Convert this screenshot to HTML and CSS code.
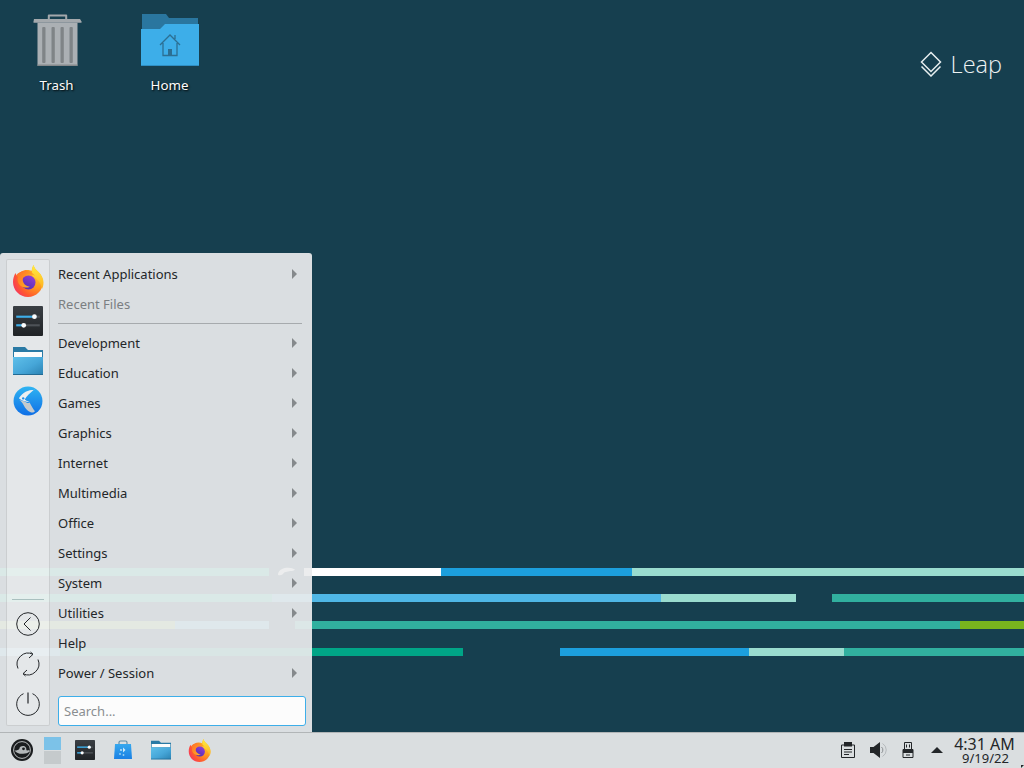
FILE: index.html
```html
<!DOCTYPE html>
<html lang="en">
<head>
<meta charset="utf-8">
<title>Desktop</title>
<link rel="stylesheet" href="styles.css">
</head>
<body>
<svg class="sprite" aria-hidden="true">
  <defs>
    <radialGradient id="ffBase" cx="0.85" cy="0.3" r="1">
      <stop offset="0" stop-color="#ffc530"/>
      <stop offset="0.4" stop-color="#ff9a1e"/>
      <stop offset="0.72" stop-color="#ff5a2e"/>
      <stop offset="1" stop-color="#f22c6e"/>
    </radialGradient>
    <linearGradient id="ffFlame" x1="0.5" y1="0" x2="0.5" y2="1">
      <stop offset="0" stop-color="#ffee40"/>
      <stop offset="1" stop-color="#ffb020"/>
    </linearGradient>
    <linearGradient id="ffCore" x1="0.8" y1="0" x2="0.2" y2="1">
      <stop offset="0" stop-color="#9440d4"/>
      <stop offset="1" stop-color="#4e2cb4"/>
    </linearGradient>
    <linearGradient id="ffFox" x1="0" y1="0" x2="1" y2="0.6">
      <stop offset="0" stop-color="#ff6a2a"/>
      <stop offset="1" stop-color="#ffb421"/>
    </linearGradient>
    <linearGradient id="folderFront" x1="0" y1="0" x2="1" y2="1">
      <stop offset="0" stop-color="#5fc0ea"/>
      <stop offset="0.55" stop-color="#46a6d8"/>
      <stop offset="1" stop-color="#2b82b2"/>
    </linearGradient>
    <linearGradient id="settingsBg" x1="0" y1="0" x2="0" y2="1">
      <stop offset="0" stop-color="#3a3f44"/>
      <stop offset="1" stop-color="#202326"/>
    </linearGradient>
    <linearGradient id="kdeBg" x1="0" y1="0" x2="0" y2="1">
      <stop offset="0" stop-color="#2fb4f2"/>
      <stop offset="1" stop-color="#0f6fe6"/>
    </linearGradient>
    <linearGradient id="bagBg" x1="0" y1="0" x2="0" y2="1">
      <stop offset="0" stop-color="#36a8ee"/>
      <stop offset="1" stop-color="#1a80e4"/>
    </linearGradient>

    <symbol id="i-firefox" viewBox="0 0 32 32">
      <path d="M1 17C1 13.500 2 10.500 3.500 8c.3 1.200.7 2 1.500 2.700C7 7.500 10.500 5 15 5c2 0 3.500.4 4.500 1C20 4 20.500 2 21.500 0c.5 3 3 5 5 7 3 3 4.500 6.500 4.500 10 0 8.300-6.700 15-15 15S1 25.300 1 17z" fill="url(#ffBase)"/>
      <path d="M21.500 0c.5 3 3 5 5 7 3 3 5 6.500 5 10.500 0 2.500-.6 4.500-1.500 6.500-.8-5-3.500-9.500-8-11.500-1.500-.8-2-3-2-6 0-2.500.3-4.700 1.500-6.500z" fill="url(#ffFlame)"/>
      <circle cx="16.500" cy="17.500" r="7" fill="url(#ffCore)"/>
      <path d="M4 10.500C6.500 7 10.500 5.500 15 6c3.500.4 6.500 2.300 8 5-2.500-1.500-5.500-2.300-9-1.300-.5.9-1.500 1.300-2.500 2-1.200 2-1 4 .3 6.500 1 1.700 3 3 6 3.500-3 1.500-7 1-9.800-1.500-2.500-2.500-3-6-2-8.500-.8-.4-1.500-.7-2-1.200z" fill="url(#ffFox)"/>
    </symbol>

    <symbol id="i-settings" viewBox="0 0 28 28">
      <rect width="28" height="28" rx="1" fill="url(#settingsBg)"/>
      <rect x="3" y="9" width="19" height="2" fill="#3daee9"/>
      <rect x="22" y="9" width="3" height="2" fill="#4d5257"/>
      <circle cx="20" cy="10" r="2.200" fill="#fcfcfc"/>
      <rect x="3" y="17" width="7" height="2" fill="#3daee9"/>
      <rect x="10" y="17" width="15" height="2" fill="#4d5257"/>
      <circle cx="10" cy="18" r="2.200" fill="#fcfcfc"/>
    </symbol>

    <symbol id="i-folder" viewBox="0 0 30 28">
      <path d="M0 0h12l3 3h15v24H0z" fill="#2a7aa5"/>
      <rect x="1" y="5" width="28" height="5" fill="#fcfcfc"/>
      <path d="M0 10h30v18H0z" fill="url(#folderFront)"/>
      <rect y="27" width="30" height="1" fill="#236b94"/>
    </symbol>
  </defs>
</svg>

<div class="screen">
  <main class="desktop">
    <div class="wall wall-1">
      <span class="bar w269 under"></span>
      <span class="gap9"></span>
      <svg class="gecko-mark" viewBox="0 0 18 9"><path d="M0 8C0 4 4 1 9 .5c4-.3 7 .5 9 2-1 1.500-3 1.500-5 1.500-2 0-3 1-5 1-1.500 0-2 1-3 2.500-1.500 1-4 1.500-5 .5z" fill="#fff"/></svg>
      <span class="gap9"></span>
      <span class="bar w137 white"></span>
      <span class="bar w191 blue"></span>
      <span class="bar w392 pale"></span>
    </div>
    <div class="wall wall-2">
      <span class="bar w272 under"></span>
      <span class="bar w389 sky"></span>
      <span class="bar w135 pale"></span>
      <span class="gap36"></span>
      <span class="bar w192 teal"></span>
    </div>
    <div class="wall wall-3">
      <span class="bar w175 lime-pale"></span>
      <span class="bar w94 sky"></span>
      <span class="gap26"></span>
      <span class="bar w665 teal"></span>
      <span class="bar w64 green"></span>
    </div>
    <div class="wall wall-4">
      <span class="bar w60 sky"></span>
      <span class="bar w403 emerald"></span>
      <span class="gap97"></span>
      <span class="bar w189 blue"></span>
      <span class="bar w95 pale"></span>
      <span class="bar w180 teal"></span>
    </div>

    <div class="desk-icons">
      <div class="desk-icon">
        <svg class="desk-glyph" viewBox="0 0 58 52">
          <path d="M19.800 5V1.500q0-1 1-1h17.400q1 0 1 1V5h-2V2.500H21.800V5z" fill="#a3a8ac"/>
          <path d="M6 5h46l1.500 2.500v1.200H5.500V7.500z" fill="#a4a9ad"/>
          <rect x="9.500" y="8.700" width="40" height="43" fill="#abb0b4"/>
          <rect x="9.500" y="50.500" width="40" height="1.500" fill="#85898c"/>
          <rect x="14.200" y="13" width="3.300" height="36" rx="1" fill="#7f8487"/>
          <rect x="23.500" y="13" width="3.300" height="36" rx="1" fill="#7f8487"/>
          <rect x="32.500" y="13" width="3.300" height="36" rx="1" fill="#7f8487"/>
          <rect x="41.500" y="13" width="3.300" height="36" rx="1" fill="#7f8487"/>
        </svg>
        <span class="desk-label">Trash</span>
      </div>
      <div class="desk-icon">
        <svg class="desk-glyph" viewBox="0 0 58 52">
          <path d="M1 0h24l3 4h29v20H1z" fill="#2a769f"/>
          <path d="M0 15h19l5-5h34v42H0z" fill="#3daee9"/>
          <rect y="51" width="58" height="1" fill="#2f8fc4"/>
          <path d="M19 31l10-10 10 10M22 29v12.500h14V29M34 25v-4" fill="none" stroke="#2c6f93" stroke-width="1.300"/>
          <rect x="27" y="35" width="4" height="6" fill="#2c6f93"/>
        </svg>
        <span class="desk-label">Home</span>
      </div>
    </div>

    <div class="leap">
      <svg class="leap-mark" viewBox="0 0 22 26">
        <path d="M11 1.500 20.500 11 11 20.500 1.500 11z" fill="none" stroke="#e6eeef" stroke-width="1.500"/>
        <path d="M1.500 15.500 11 25l9.500-9.500" fill="none" stroke="#e6eeef" stroke-width="1.500"/>
      </svg>
      <span class="leap-text">Leap</span>
    </div>

    <section class="menu">
      <aside class="rail">
        <div class="rail-apps">
          <div class="rail-cell"><svg class="rail-icon ff"><use href="#i-firefox"/></svg></div>
          <div class="rail-cell"><svg class="rail-icon"><use href="#i-settings"/></svg></div>
          <div class="rail-cell"><svg class="rail-icon"><use href="#i-folder"/></svg></div>
          <div class="rail-cell">
            <svg class="rail-icon" viewBox="0 0 28 28">
              <circle cx="14" cy="14" r="13.500" fill="url(#kdeBg)"/>
              <path d="M6 13c2 1.500 3 3 4 5 1.500 3 3 5 6.500 6.500 2 .5 3 0 4-1-2-2-3.500-5.500-5-8-1.500 1-3 0-4.500-1-1.500-.5-3-1-5-1.500z" fill="#c4cace"/>
              <path d="M20 3.500C14 3.500 9 6 5.500 11.500c1.500 1.500 4 2.500 6.500 3 1 .3 2 .5 3.500.5-1.500-1-3.500-1.300-4.500-2.500 1.500-3 5-6 9-9.500z" fill="#eceff1"/>
              <circle cx="9.500" cy="11.500" r="1.100" fill="#1f8fea"/>
            </svg>
          </div>
        </div>
        <div class="rail-actions">
          <hr class="rail-sep">
          <div class="rail-cell">
            <svg class="action-icon" viewBox="0 0 24 24"><circle cx="12" cy="12" r="11.300" fill="none" stroke="#232629"/><path d="M14.500 5.500 8 12l6.500 6.500" fill="none" stroke="#232629"/></svg>
          </div>
          <div class="rail-cell">
            <svg class="action-icon" viewBox="0 0 24 24"><path d="M2 16.500A11 11 0 0 1 17 2.300M22 7.500A11 11 0 0 1 7 21.700" fill="none" stroke="#232629"/><path d="M13 6l4-3.700L14.500 0M11 18l-4 3.700 2.500 2.300" fill="none" stroke="#232629"/></svg>
          </div>
          <div class="rail-cell">
            <svg class="action-icon" viewBox="0 0 24 24"><path d="M7.500 1.700a11.300 11.300 0 1 0 9 0" fill="none" stroke="#232629"/><path d="M12 .5v11" fill="none" stroke="#232629" stroke-width="1.200"/></svg>
          </div>
        </div>
      </aside>
      <div class="menu-main">
        <ul class="entries">
          <li class="entry has-sub">Recent Applications</li>
          <li class="entry muted">Recent Files</li>
          <li class="entry-sep"></li>
          <li class="entry has-sub">Development</li>
          <li class="entry has-sub">Education</li>
          <li class="entry has-sub">Games</li>
          <li class="entry has-sub">Graphics</li>
          <li class="entry has-sub">Internet</li>
          <li class="entry has-sub">Multimedia</li>
          <li class="entry has-sub">Office</li>
          <li class="entry has-sub">Settings</li>
          <li class="entry has-sub">System</li>
          <li class="entry has-sub">Utilities</li>
          <li class="entry">Help</li>
          <li class="entry has-sub">Power / Session</li>
        </ul>
        <input class="search" type="text" placeholder="Search...">
      </div>
    </section>
  </main>

  <footer class="panel">
    <svg class="kickoff" viewBox="0 0 22 22">
      <circle cx="11" cy="11" r="11" fill="#1b1d1f"/>
      <circle cx="11" cy="11" r="8.400" fill="none" stroke="#dfe2e3" stroke-width=".8"/>
      <path d="M3.500 11.500c2 2.800 5 3.500 8.500 3.300 2.500-.1 5-.7 6.500-2.300l-.2-1.500c-1 .5-2 .5-3 .3.500-2.200-1-4.300-3.300-4.300-2 0-3.700 1.300-3.700 3-.1.800-2.500 1.500-4.800 1.500z" fill="#b4b8ba"/>
      <circle cx="12.500" cy="9.800" r="1.400" fill="#1b1d1f"/>
      <path d="M3.500 12.500c2 3 5 4 8.500 3.800 2.500-.1 5-.9 6.500-2.800" fill="none" stroke="#1b1d1f" stroke-width=".8"/>
    </svg>
    <div class="pager">
      <span class="desk-a"></span>
      <span class="desk-b"></span>
    </div>
    <div class="tasks">
      <div class="task"><svg class="task-icon"><use href="#i-settings"/></svg></div>
      <div class="task">
        <svg class="task-icon" viewBox="0 0 20 20">
          <path d="M6 4V2.500Q6 1 7.500 1h5Q14 1 14 2.500V4" fill="none" stroke="#5f8ea8" stroke-width="1.200"/>
          <path d="M2 4h16l1 15H1z" fill="url(#bagBg)"/>
          <path d="M10 7.500l2.500 2.500-2.500 2.500z" fill="#cfeaf9"/>
          <circle cx="8" cy="10" r=".9" fill="#cfeaf9"/>
          <circle cx="7" cy="14" r=".9" fill="#9bd4f5"/>
          <circle cx="10.500" cy="15" r=".9" fill="#9bd4f5"/>
        </svg>
      </div>
      <div class="task"><svg class="task-icon"><use href="#i-folder"/></svg></div>
      <div class="task"><svg class="task-icon firefox"><use href="#i-firefox"/></svg></div>
    </div>
    <div class="tray">
      <div class="tray-item">
        <svg class="tray-icon" viewBox="0 0 16 16">
          <path d="M4 3H1.500v12.500h13V3H12" fill="none" stroke="#232629"/>
          <rect x="4" y="0" width="8" height="4.500" fill="#232629"/>
          <path d="M4 7.500h8M4 10h8M4 12.500h5" stroke="#232629"/>
        </svg>
      </div>
      <div class="tray-item">
        <svg class="tray-icon" viewBox="0 0 16 16">
          <path d="M0 5h3.500L10 0v16l-6.500-5H0z" fill="#232629"/>
          <path d="M11.500 5a4 4 0 0 1 0 6" fill="none" stroke="#8a8e91"/>
          <path d="M12.500 1.500a7.500 7.500 0 0 1 0 13" fill="none" stroke="#b6babd"/>
        </svg>
      </div>
      <div class="tray-item">
        <svg class="tray-icon" viewBox="0 0 16 16">
          <path d="M4.500.5h7v7h-7z" fill="none" stroke="#232629"/>
          <path d="M6.500 2.500v3M9.500 2.500v3" stroke="#232629"/>
          <path d="M3 7.500h10v8H3z" fill="none" stroke="#232629"/>
          <path d="M3 7h10v4H3z" fill="#232629"/>
          <path d="M6 13h4" stroke="#232629"/>
        </svg>
      </div>
      <div class="tray-arrow"></div>
    </div>
    <div class="clock">
      <span class="clock-time">4:31 AM</span>
      <span class="clock-date">9/19/22</span>
    </div>
  </footer>
  <span class="cursor"></span>
</div>
</body>
</html>
```

FILE: styles.css
```css
* { box-sizing: border-box; }

html, body {
  margin: 0;
  padding: 0;
  height: 100%;
  overflow: hidden;
}

body {
  font-family: "Noto Sans", "Liberation Sans", sans-serif;
  font-size: 13px;
  color: #232629;
}

.sprite { position: absolute; width: 0; height: 0; }

.screen {
  position: relative;
  width: 1024px;
  height: 768px;
  display: flex;
  flex-direction: column;
}

.cursor {
  position: absolute;
  left: 1021px;
  top: 765px;
  border-left: 3px solid #232629;
  border-bottom: 3px solid transparent;
}

.desktop {
  position: relative;
  flex: 1;
  background: #163f4f;
  overflow: hidden;
}

/* wallpaper stripes */
.wall {
  position: absolute;
  left: 0;
  right: 0;
  height: 8px;
  display: flex;
  align-items: stretch;
}
.wall-1 { top: 568px; }
.wall-2 { top: 594px; }
.wall-3 { top: 621px; }
.wall-4 { top: 648px; }

.bar { display: block; flex: none; }
.gap9 { flex: none; width: 9px; }
.gap26 { flex: none; width: 26px; }
.gap36 { flex: none; width: 36px; }
.gap97 { flex: none; width: 97px; }
.gecko-mark { flex: none; width: 17px; height: 9px; margin-top: -1px; }

.w60 { width: 60px; }
.w64 { width: 64px; }
.w94 { width: 94px; }
.w95 { width: 95px; }
.w135 { width: 135px; }
.w137 { width: 137px; }
.w175 { width: 175px; }
.w180 { width: 180px; }
.w189 { width: 189px; }
.w191 { width: 191px; }
.w192 { width: 192px; }
.w269 { width: 269px; }
.w272 { width: 272px; }
.w389 { width: 389px; }
.w392 { width: 392px; }
.w403 { width: 403px; }
.w665 { width: 665px; }

.white { background: #fff; }
.blue { background: #1c9fdd; }
.sky { background: #4fb7e6; }
.pale { background: #9adccf; }
.under { background: #18c4a4; }
.teal { background: #31b09f; }
.green { background: #78b41e; }
.emerald { background: #00a587; }
.lime-pale { background: #90c45a; }

/* desktop icons */
.desk-icons {
  position: relative;
  display: flex;
  padding-top: 14px;
}
.desk-icon {
  width: 113px;
  display: flex;
  flex-direction: column;
  align-items: center;
}
.desk-glyph { width: 58px; height: 52px; display: block; }
.desk-label {
  margin-top: 10px;
  font-size: 13.33px;
  color: #fcfcfc;
  line-height: 18px;
  text-shadow: 1px 1px 2px #000;
}

/* logo */
.leap {
  position: absolute;
  top: 50px;
  right: 22px;
  display: flex;
  align-items: center;
  gap: 9px;
}
.leap-mark { width: 22px; height: 26px; display: block; }
.leap-text {
  font-family: "Open Sans", "Noto Sans", sans-serif;
  font-weight: 300;
  font-size: 23.5px;
  line-height: 28px;
  color: #eef3f3;
}

/* application menu */
.menu {
  position: absolute;
  left: 0;
  bottom: 0;
  width: 312px;
  height: 479px;
  padding: 6px;
  display: flex;
  background: rgba(234, 236, 237, 0.925);
  border-radius: 3px 3px 0 0;
}

.rail {
  flex: none;
  width: 44px;
  display: flex;
  flex-direction: column;
  justify-content: space-between;
  background: rgba(255, 255, 255, 0.28);
  border: 1px solid rgba(35, 38, 41, 0.13);
  border-radius: 2px;
}
.rail-apps { padding-top: 1px; }
.rail-cell {
  height: 40px;
  display: flex;
  align-items: center;
  justify-content: center;
}
.rail-icon { width: 30px; height: 30px; display: block; }
.rail-icon.ff { width: 32px; height: 32px; }
.action-icon { width: 24px; height: 24px; display: block; overflow: visible; }
.rail-actions { padding-bottom: 1px; }
.rail-sep {
  margin: 0 5px 4px;
  height: 1px;
  border: 0;
  background: #a9c0bf;
}

.menu-main {
  flex: 1;
  min-width: 0;
  padding-left: 8px;
  display: flex;
  flex-direction: column;
}

.entries { list-style: none; margin: 0; padding: 0; }
.entry {
  position: relative;
  height: 30px;
  line-height: 30px;
}
.has-sub::after {
  content: "";
  position: absolute;
  right: 9px;
  top: 10px;
  border-left: 5px solid #85898c;
  border-top: 5px solid transparent;
  border-bottom: 5px solid transparent;
}
.muted { color: #7b7f82; }
.entry-sep {
  height: 9px;
  margin-right: 4px;
  padding-top: 4px;
}
.entry-sep::before {
  content: "";
  display: block;
  height: 1px;
  background: #a6aaad;
}

.search {
  display: block;
  width: 100%;
  height: 30px;
  margin-top: 8px;
  padding: 0 5px;
  font: inherit;
  color: #232629;
  background: #fcfcfc;
  border: 1px solid #3daee9;
  border-radius: 3px;
  outline: none;
}
.search::placeholder { color: #8a8e91; opacity: 1; }

/* panel */
.panel {
  flex: none;
  height: 36px;
  display: flex;
  align-items: center;
  padding: 0 5px 1px 11px;
  background: #dadee0;
  border-top: 1px solid #b1b5b7;
}
.kickoff { width: 22px; height: 22px; flex: none; display: block; margin-right: 11px; }

.pager {
  flex: none;
  width: 17px;
  height: 27px;
  margin-right: 5px;
  display: flex;
  flex-direction: column;
  gap: 1px;
}
.desk-a { flex: 1; background: #7cc2e8; }
.desk-b { flex: 1; background: #c5cacc; }

.tasks { display: flex; }
.task {
  width: 38px;
  height: 34px;
  display: flex;
  align-items: center;
  justify-content: center;
}
.task-icon { width: 20px; height: 20px; display: block; }
.task-icon.firefox { width: 23px; height: 23px; }

.tray { margin-left: auto; display: flex; align-items: center; }
.tray-item {
  width: 30px;
  display: flex;
  justify-content: center;
}
.tray-icon { width: 16px; height: 16px; display: block; overflow: visible; }
.tray-arrow {
  width: 27px;
  display: flex;
  justify-content: center;
}
.tray-arrow::before {
  content: "";
  border-left: 6px solid transparent;
  border-right: 6px solid transparent;
  border-bottom: 6px solid #232629;
}

.clock {
  flex: none;
  width: 69px;
  display: flex;
  flex-direction: column;
  align-items: center;
}
.clock-time { font-size: 16px; line-height: 16px; }
.clock-date { font-size: 13px; line-height: 13px; padding-left: 2px; }
```
